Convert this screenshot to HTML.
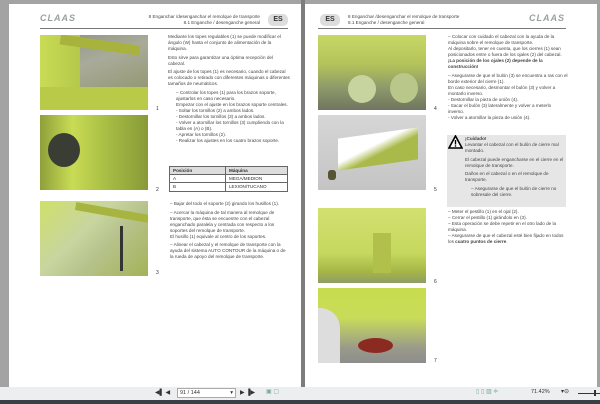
<!DOCTYPE html>
<html><head><meta charset="utf-8"><style>
*{margin:0;padding:0;box-sizing:border-box}
body{width:600px;height:404px;background:#a3a3a3;position:relative;overflow:hidden;font-family:"Liberation Sans",sans-serif;color:#333}
.pg{position:absolute;top:4px;height:383px;background:#fff}
.a{position:absolute}
.t{position:absolute;font-size:4.6px;line-height:6px;color:#444}
.t p{margin-bottom:2.5px}
.logo{font-weight:bold;font-style:italic;color:#9aa0a0;font-size:9px;letter-spacing:1px}
.es{background:#ddd;border-radius:5px;font-weight:bold;font-size:7px;text-align:center;line-height:12px;width:20px;height:12px;color:#333}
.hd{font-size:4.6px;line-height:5.5px;color:#444}
.img{position:absolute;width:108px;height:75px;overflow:hidden}
.num{position:absolute;font-size:5px;color:#333}
</style></head><body>
<div class="a" style="left:301px;top:0;width:4px;height:387px;background:#7d7d7d"></div>
<div class="pg" style="left:9px;width:292px"></div>
<div class="pg" style="left:305px;width:292px"></div>

<!-- left page -->
<div class="a logo" style="left:40px;top:13px">CLAAS</div>
<div class="a hd" style="left:140px;top:14px;width:120px;text-align:right">8 Enganchar /desenganchar el remolque de transporte<br>8.1 Enganche / desenganche general</div>
<div class="a es" style="left:268px;top:14px">ES</div>
<div class="a" style="left:40px;top:28px;width:248px;height:1px;background:#777"></div>

<div class="img" style="left:40px;top:35px;background:linear-gradient(160deg,#8c8f80 0%,#a9ab9a 40%,#8a9060 100%)"><div class="a" style="left:0;top:0;width:40px;height:75px;background:linear-gradient(90deg,#c9dc55,#b5c84a)"></div><div class="a" style="left:20px;top:5px;width:80px;height:10px;background:#a8b33e;transform:rotate(8deg)"></div><div class="a" style="left:0;top:52px;width:108px;height:23px;background:#b8ca48"></div></div>
<div class="img" style="left:40px;top:115px;background:linear-gradient(90deg,#8ea03a 0%,#c9dc55 30%,#a9bf45 60%,#879a38 100%)"><div class="a" style="left:8px;top:18px;width:32px;height:34px;border-radius:50%;background:#3a3d33"></div></div>
<div class="img" style="left:40px;top:201px;background:linear-gradient(135deg,#cfe06a 0%,#c8d5a0 40%,#b6c38c 60%,#a4b257 100%)"><div class="a" style="left:35px;top:8px;width:80px;height:8px;background:#a7b540;transform:rotate(10deg)"></div><div class="a" style="left:80px;top:25px;width:3px;height:45px;background:#333"></div></div>
<div class="num" style="left:156px;top:106px">1</div>
<div class="num" style="left:156px;top:187px">2</div>
<div class="num" style="left:156px;top:270px">3</div>

<div class="t" style="left:168px;top:34px;width:122px">
<p>Mediante los topes regulables (1) se puede modificar el ángulo (W) hasta el conjunto de alimentación de la máquina.</p>
<p>Esto sirve para garantizar una óptima recepción del cabezal.</p>
<p>El ajuste de los topes (1) es necesario, cuando el cabezal es colocado o retirado con diferentes máquinas o diferentes tamaños de neumáticos.</p>
<p style="padding-left:8px">– Controlar los topes (1) para los brazos soporte, ajustarlos en caso necesario.<br>Empezar con el ajuste en los brazos soporte centrales.<br>- Soltar los tornillos (2) a ambos lados.<br>- Destornillar los tornillos (3) a ambos lados.<br>- Volver a atornillar los tornillos (3) cumpliendo con la tabla en (A) o (B).<br>- Apretar los tornillos (2).<br>- Realizar los ajustes en los cuatro brazos soporte.</p>
</div>
<div class="a" style="left:169px;top:166px;width:119px;height:26px;border:1px solid #666;font-size:4.6px">
<div style="height:8px;background:#ddd;border-bottom:1px solid #666;font-weight:bold;line-height:8px"><span style="padding-left:3px">Posición</span><span style="position:absolute;left:59px">Máquina</span></div>
<div style="height:8px;border-bottom:1px solid #666;line-height:8px"><span style="padding-left:3px">A</span><span style="position:absolute;left:59px">MEGA/MEDION</span></div>
<div style="height:8px;line-height:8px"><span style="padding-left:3px">B</span><span style="position:absolute;left:59px">LEXION/TUCANO</span></div>
<div class="a" style="left:55px;top:0;width:1px;height:24px;background:#666"></div>
</div>
<div class="t" style="left:170px;top:201px;width:120px">
<p>– Bajar del todo el soporte (2) girando los husillos (1).</p>
<p>– Acercar la máquina de tal manera al remolque de transporte, que ésta se encuentre con el cabezal enganchado paralela y centrada con respecto a los soportes del remolque de transporte.<br>El husillo (1) equivale al centro de los soportes.</p>
<p>– Alinear el cabezal y el remolque de transporte con la ayuda del sistema AUTO CONTOUR de la máquina o de la rueda de apoyo del remolque de transporte.</p>
</div>

<!-- right page -->
<div class="a es" style="left:320px;top:14px">ES</div>
<div class="a hd" style="left:348px;top:14px;width:130px">8 Enganchar /desenganchar el remolque de transporte<br>8.1 Enganche / desenganche general</div>
<div class="a logo" style="left:529px;top:13px">CLAAS</div>
<div class="a" style="left:318px;top:28px;width:248px;height:1px;background:#777"></div>

<div class="img" style="left:318px;top:35px;background:linear-gradient(180deg,#c7d865 0%,#b3c25a 40%,#8e9a6a 70%,#6f7560 100%)"><div class="a" style="left:30px;top:40px;width:28px;height:28px;border-radius:50%;background:#c8d4a0"></div><div class="a" style="left:72px;top:38px;width:28px;height:30px;border-radius:50%;background:#b9c88a"></div></div>
<div class="img" style="left:318px;top:115px;background:linear-gradient(180deg,#d6d6d6 0%,#c4c4c4 100%)"><div class="a" style="left:20px;top:18px;width:80px;height:32px;background:linear-gradient(160deg,#fff 40%,#a9b94a 60%);transform:skewY(-8deg)"></div><div class="a" style="left:10px;top:55px;width:8px;height:10px;border-radius:3px;background:#553"></div></div>
<div class="img" style="left:318px;top:208px;background:linear-gradient(180deg,#d2e070 0%,#c6d85e 60%,#a5b646 85%,#8f9c66 100%)"><div class="a" style="left:55px;top:25px;width:18px;height:40px;background:#b0c04a"></div></div>
<div class="img" style="left:318px;top:288px;background:linear-gradient(180deg,#c8dc4e 0%,#c9dc5a 40%,#9a9a8a 80%,#8d8d8d 100%)"><div class="a" style="left:0;top:20px;width:22px;height:55px;background:#ddd;border-radius:0 20px 0 0"></div><div class="a" style="left:40px;top:50px;width:35px;height:15px;border-radius:50%;background:#8b2a20"></div></div>
<div class="num" style="left:434px;top:106px">4</div>
<div class="num" style="left:434px;top:187px">5</div>
<div class="num" style="left:434px;top:279px">6</div>
<div class="num" style="left:434px;top:358px">7</div>

<div class="t" style="left:448px;top:34px;width:120px">
<p>– Colocar con cuidado el cabezal con la ayuda de la máquina sobre el remolque de transporte.<br>Al depositarlo, tener en cuenta, que los cierres (1) sean posicionados entre o fuera de los ojales (2) del cabezal.<br><b>¡La posición de los ojales (2) depende de la construcción!</b></p>
<p>– Asegurarse de que el bulón (3) se encuentra a ras con el borde exterior del cierre (1).<br>En caso necesario, desmontar el bulón (3) y volver a montarlo inverso.<br>- Destornillar la pieza de unión (4).<br>- Sacar el bulón (3) lateralmente y volver a meterlo inverso.<br>- Volver a atornillar la pieza de unión (4).</p>
</div>
<div class="a" style="left:447px;top:135px;width:119px;height:72px;background:#e6e6e6"></div>
<svg class="a" style="left:448px;top:135px" width="15" height="14" viewBox="0 0 15 14"><path d="M7.5 1 L14 13 L1 13 Z" fill="#fff" stroke="#000" stroke-width="1.6"/><rect x="6.8" y="5" width="1.4" height="4.5" fill="#000"/><rect x="6.8" y="10.3" width="1.4" height="1.4" fill="#000"/></svg>
<div class="t" style="left:465px;top:136px;width:100px">
<p><b>¡Cuidado!</b><br>Levantar el cabezal con el bulón de cierre mal montado.</p>
<p>El cabezal puede engancharse en el cierre en el remolque de transporte.</p>
<p>Daños en el cabezal o en el remolque de transporte.</p>
<p style="padding-left:6px">– Asegurarse de que el bulón de cierre no sobresale del cierre.</p>
</div>
<div class="t" style="left:448px;top:209px;width:120px">
<p>– Meter el pestillo (1) en el ojal (2).<br>– Cerrar el pestillo (1) girándolo en (3).<br>– Esta operación se debe repetir en el otro lado de la máquina.<br>– Asegurarse de que el cabezal esté bien fijado en todos los <b>cuatro puntos de cierre</b>.</p>
</div>

<!-- toolbar -->
<div class="a" style="left:0;top:387px;width:600px;height:13px;background:#eceef0"></div>
<div class="a" style="left:0;top:400px;width:600px;height:4px;background:#3a3f45"></div>
<div class="a" style="left:155px;top:389px;font-size:6px;color:#333">◀▌ ◀</div>
<div class="a" style="left:177px;top:388px;width:59px;height:10px;border:1px solid #aaa;background:#fff;font-size:5.5px;line-height:8px;padding-left:2px">91 / 144<span style="float:right;padding-right:2px">▾</span></div>
<div class="a" style="left:240px;top:389px;font-size:6px;color:#333">▶ ▐▶</div>
<div class="a" style="left:266px;top:388px;font-size:6px;color:#7a9">▣ ▢</div>
<div class="a" style="left:476px;top:388px;font-size:6px;color:#7a9">▯ ▯ ▥ ≑</div>
<div class="a" style="left:531px;top:389px;font-size:5.5px;color:#333">71.42%</div>
<div class="a" style="left:561px;top:388px;font-size:6px;color:#333">▾⊝</div>
<div class="a" style="left:578px;top:393px;width:22px;height:1px;background:#333"></div>
<div class="a" style="left:594px;top:390px;width:2px;height:6px;background:#333"></div>
</body></html>
